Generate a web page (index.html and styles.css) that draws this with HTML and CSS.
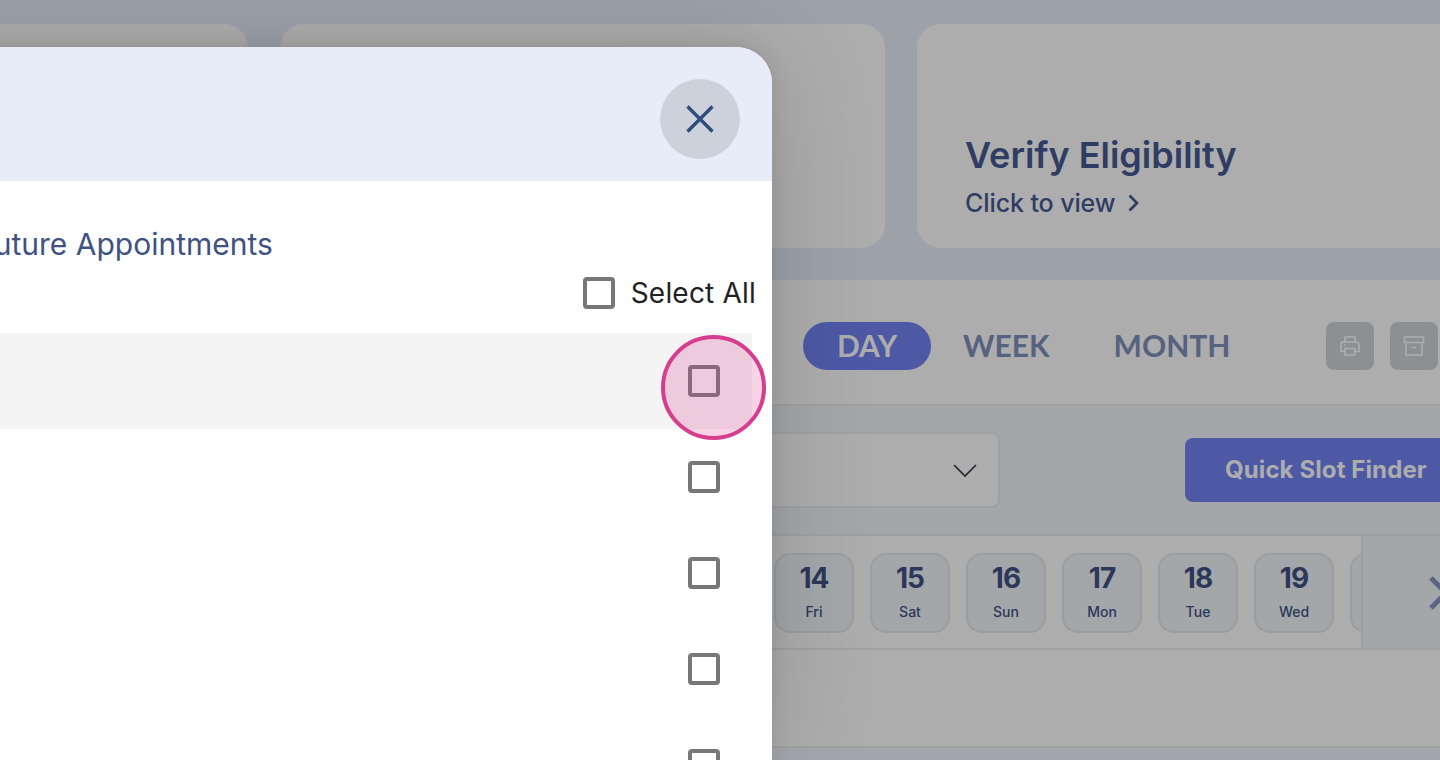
FILE: index.html
```html
<!DOCTYPE html>
<html lang="en">
<head>
  <meta charset="UTF-8" />
  <title>Appointments</title>
  <link rel="stylesheet" href="styles.css">
</head>
<body>
  <div class="page">
    <section class="top-cards">
      <div class="card card-first"></div>
      <div class="card card-second"></div>
      <div class="card card-third">
        <h2>Verify Eligibility</h2>
        <a class="card-link">Click to view
          <svg width="16" height="18" viewBox="0 0 16 18"><path d="M3.500 1.500 11 9l-7.500 7.500" fill="none" stroke="currentColor" stroke-width="2.600"/></svg>
        </a>
      </div>
    </section>
    <section class="view-bar">
      <div class="view-tabs">
        <span class="tab active">DAY</span>
        <span class="tab">WEEK</span>
        <span class="tab">MONTH</span>
      </div>
      <div class="view-actions">
        <button class="icon-btn">
          <svg width="24" height="24" viewBox="0 0 24 24" fill="none" stroke="currentColor" stroke-width="1.600"><path d="M7 8V3h10v5M7 17.500H3v-7a2.500 2.500 0 0 1 2.500-2.500h13a2.500 2.500 0 0 1 2.500 2.500v7h-4"/><path d="M7 14.500h10V21H7z"/><path d="M6 11h1.500"/></svg>
        </button>
        <button class="icon-btn">
          <svg width="24" height="24" viewBox="0 0 24 24" fill="none" stroke="currentColor" stroke-width="1.600"><path d="M2.500 3h19v5.500h-19zM4 8.500V21h16V8.500M9.500 13.500h5"/></svg>
        </button>
      </div>
    </section>
    <section class="filter-row">
      <div class="select-box">
        <svg width="26" height="16" viewBox="0 0 26 16"><path d="m2 3 11 11L24 3" fill="none" stroke="#26282c" stroke-width="1.700"/></svg>
      </div>
      <button class="quick-btn">Quick Slot Finder</button>
    </section>
    <section class="date-strip">
      <div class="dates">
        <div class="date"><b>14</b><span>Fri</span></div>
        <div class="date"><b>15</b><span>Sat</span></div>
        <div class="date"><b>16</b><span>Sun</span></div>
        <div class="date"><b>17</b><span>Mon</span></div>
        <div class="date"><b>18</b><span>Tue</span></div>
        <div class="date"><b>19</b><span>Wed</span></div>
        <div class="date"></div>
      </div>
      <div class="next-btn">
        <svg width="40" height="40" viewBox="0 0 40 40"><path d="m8 5 15 15L8 35" fill="none" stroke="#5a6683" stroke-width="5"/></svg>
      </div>
    </section>
    <section class="empty-row"></section>
  </div>

  <div class="modal">
    <header class="modal-head">
      <button class="close-btn">
        <svg width="32" height="32" viewBox="0 0 32 32"><path d="m3.500 3.500 25 25M28.500 3.500l-25 25" fill="none" stroke="#334a7c" stroke-width="3.400"/></svg>
      </button>
    </header>
    <div class="modal-body">
      <h3>Future Appointments</h3>
      <label class="select-all"><span class="check"></span> Select All</label>
      <div class="appt-row hl"><span class="check"></span></div>
      <div class="appt-row"><span class="check"></span></div>
      <div class="appt-row"><span class="check"></span></div>
      <div class="appt-row"><span class="check"></span></div>
      <div class="appt-row"><span class="check"></span></div>
    </div>
  </div>

  <div class="touch-mark"></div>
</body>
</html>
```

FILE: styles.css
```css
* {
  margin: 0;
  padding: 0;
  box-sizing: border-box;
  font-family: Inter, 'Noto Sans', sans-serif;
}
html, body {
  height: 100%;
  overflow: hidden;
}
body {
  position: relative;
  background: #a3a7ac;
}
.page {
  height: 760px;
  overflow: hidden;
}
.top-cards {
  display: flex;
  gap: 32px;
  height: 280px;
  padding: 24px 0 32px;
  margin-left: -100px;
  background: #9ca1aa;
}
.card {
  background: #adadad;
  border-radius: 24px;
}
.card-first {
  width: 348px;
}
.card-second {
  width: 605px;
}
.card-third {
  flex: 1;
  margin-right: -100px;
  padding: 107px 48px 0;
  color: #2f3c63;
}
.card-third h2 {
  font-size: 36px;
  font-weight: 600;
  line-height: 48px;
}
.card-link {
  display: flex;
  align-items: center;
  gap: 11px;
  font-size: 25px;
  font-weight: 500;
  line-height: 48px;
  letter-spacing: -0.1px;
}
.view-bar {
  display: flex;
  justify-content: space-between;
  align-items: center;
  height: 126px;
  padding: 8px 0 0 803px;
  background: #adadad;
  border-bottom: 2px solid #a0a0a1;
}
.view-tabs {
  display: flex;
  align-items: center;
}
.tab {
  padding: 0 32px;
  height: 48px;
  line-height: 46px;
  font-size: 30px;
  font-family: Lato, sans-serif;
  font-weight: 700;
  color: #56627f;
}
.tab.active {
  width: 128px;
  text-align: center;
  padding: 0;
  background: #4d59a5;
  color: #adadad;
  border-radius: 24px;
}
.view-actions {
  display: flex;
  gap: 16px;
  margin-right: 2px;
}
.icon-btn {
  display: flex;
  align-items: center;
  justify-content: center;
  width: 48px;
  height: 48px;
  border: none;
  border-radius: 8px;
  background: #8d9093;
  color: #adadad;
}
.filter-row {
  display: flex;
  justify-content: space-between;
  align-items: center;
  height: 130px;
  padding: 0 0 0 772px;
  background: #a3a7aa;
  border-bottom: 2px solid #9d9fa3;
}
.select-box {
  display: flex;
  justify-content: flex-end;
  align-items: center;
  width: 228px;
  height: 76px;
  padding-right: 20px;
  background: #adadad;
  border: 2px solid #9ea0a2;
  border-left: none;
  border-radius: 0 8px 8px 0;
}
.quick-btn {
  width: 300px;
  height: 64px;
  margin-right: -45px;
  padding: 0 0 2px 40px;
  text-align: left;
  border: none;
  border-radius: 8px;
  background: #4d59a5;
  color: #adadad;
  font-size: 24px;
  font-weight: 700;
  letter-spacing: 0.1px;
}
.date-strip {
  display: flex;
  justify-content: space-between;
  height: 114px;
  padding-left: 774px;
  background: #adadad;
  border-bottom: 2px solid #a0a0a1;
}
.dates {
  display: flex;
  gap: 16px;
  width: 587px;
  padding-top: 17px;
  overflow: hidden;
}
.date {
  flex: none;
  display: flex;
  flex-direction: column;
  align-items: center;
  width: 80px;
  height: 80px;
  border: 2px solid #9a9da1;
  border-radius: 16px;
  background: #a3a7aa;
  color: #2c3759;
}
.date b {
  font-size: 28px;
  line-height: 47px;
  font-weight: 700;
  letter-spacing: -1px;
}
.date span {
  font-size: 14px;
  line-height: 20px;
  font-weight: 500;
}
.next-btn {
  flex: none;
  width: 79px;
  height: 112px;
  padding: 37px 0 0 60px;
  margin-left: auto;
  background: #a3a7aa;
  border-left: 2px solid #9d9fa3;
  overflow: hidden;
}
.empty-row {
  height: 98px;
  background: #adadad;
  border-bottom: 2px solid #a0a0a1;
}

/* modal sits over the dimmed page, left part is off screen */
.modal {
  position: absolute;
  top: 47px;
  left: -500px;
  width: 1272px;
  height: 713px;
  border-radius: 36px 36px 0 0;
  background: #fff;
  box-shadow: 0 0 20px rgba(0, 0, 0, 0.1), 0 0 110px rgba(0, 0, 0, 0.14);
}
.modal-head {
  display: flex;
  justify-content: flex-end;
  align-items: center;
  height: 134px;
  padding-right: 32px;
  background: #e8ecf8;
  border-radius: 36px 36px 0 0;
}
.close-btn {
  display: flex;
  align-items: center;
  justify-content: center;
  width: 80px;
  height: 80px;
  margin-top: 10px;
  border: none;
  border-radius: 50%;
  background: #cdd1dc;
}
.modal-body {
  height: 579px;
  overflow: hidden;
  padding: 43px 20px 0 0;
}
.modal-body h3 {
  padding-left: 477px;
  font-size: 30px;
  line-height: 40px;
  font-weight: 400;
  color: #3f5283;
}
.select-all {
  display: flex;
  justify-content: flex-end;
  align-items: center;
  gap: 16px;
  height: 48px;
  margin: 5px 0 0;
  transform: translateX(4px);
  font-size: 28px;
  letter-spacing: 0.2px;
  color: #222;
}
.appt-row {
  display: flex;
  justify-content: flex-end;
  align-items: center;
  height: 96px;
  padding-right: 32px;
}
.select-all + .appt-row {
  margin-top: 16px;
}
.appt-row.hl {
  background: #f4f4f4;
}
.check {
  flex: none;
  width: 32px;
  height: 32px;
  border: 4px solid #777;
  border-radius: 4px;
  background: #fff;
}
.hl .check {
  background: transparent;
}
.touch-mark {
  position: absolute;
  top: 335px;
  left: 661px;
  width: 105px;
  height: 105px;
  border: 4px solid #d63d8e;
  border-radius: 50%;
  background: rgba(214, 61, 142, 0.22);
}
```
